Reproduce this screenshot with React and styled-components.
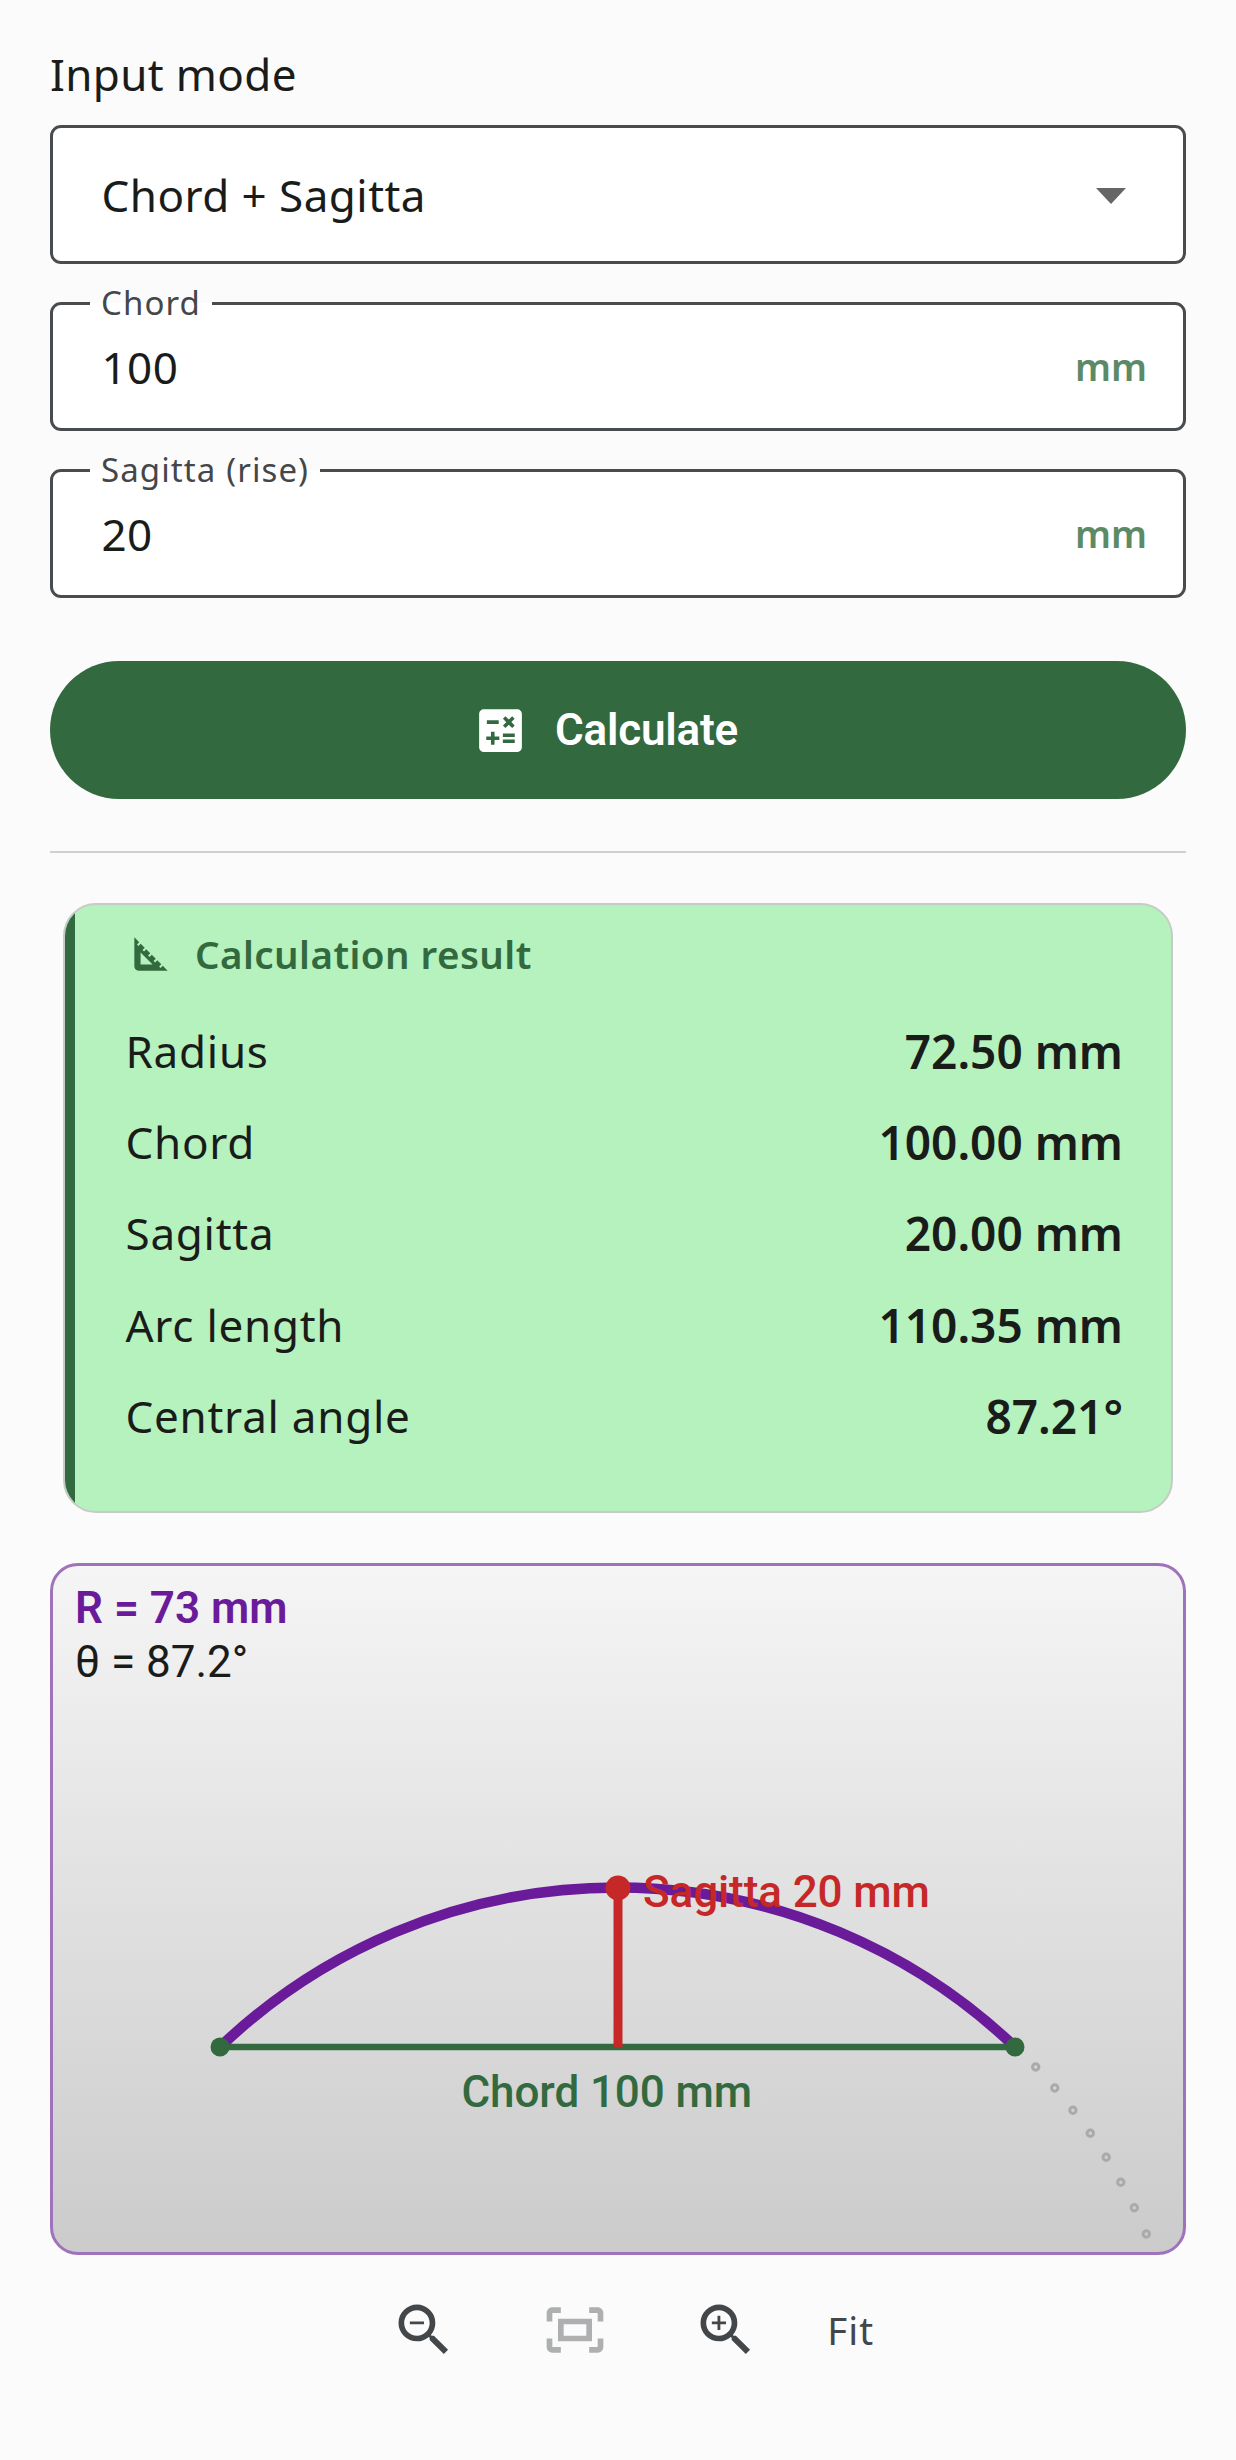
import React from "react";
import styled, { createGlobalStyle } from "styled-components";
import {
  MdCalculate,
  MdOutlineFitScreen,
  MdSquareFoot,
  MdZoomIn,
  MdZoomOut,
} from "react-icons/md";

const GlobalStyle = createGlobalStyle`
  body {
    margin: 0;
    background: #fbfbfb;
    font-family: "Noto Sans", sans-serif;
    color: #1a1c1a;
  }
`;

const Page = styled.div`
  width: 1236px;
  height: 2460px;
  box-sizing: border-box;
  padding: 44px 50px 0;
  display: flex;
  flex-direction: column;
`;

const ModeLabel = styled.div`
  height: 60px;
  line-height: 60px;
  font-size: 44px;
  letter-spacing: 0.35px;
  margin-bottom: 21px;
`;

const Select = styled.div`
  height: 139px;
  box-sizing: border-box;
  border: 3px solid #494c4f;
  border-radius: 11px;
  background: #fff;
  padding: 0 50px 0 48.5px;
  display: flex;
  align-items: center;
  justify-content: space-between;
  font-size: 44px;
  letter-spacing: 0.45px;
  margin-bottom: 38px;
`;

const Arrow = styled.div`
  width: 0;
  height: 0;
  margin: 3px 7px 0 0;
  border-left: 15px solid transparent;
  border-right: 15px solid transparent;
  border-top: 16px solid #666;
`;

const Field = styled.div`
  position: relative;
  height: 129px;
  box-sizing: border-box;
  border: 3px solid #494c4f;
  border-radius: 11px;
  background: #fff;
  padding: 0 36px 0 48.5px;
  display: flex;
  align-items: center;
  justify-content: space-between;
  font-size: 44px;
  letter-spacing: 0.45px;
  margin-bottom: 38px;
`;

const FieldLabel = styled.span`
  position: absolute;
  left: 37px;
  top: -22px;
  padding: 0 11px;
  background: linear-gradient(#fbfbfb 50%, #fff 50%);
  font-size: 33px;
  letter-spacing: 1.1px;
  line-height: 40px;
  color: #44474a;
`;

const Unit = styled.span`
  font-size: 37.5px;
  font-weight: 600;
  letter-spacing: 0;
  color: #5c8a66;
`;

const CalcButton = styled.button`
  height: 138px;
  margin-top: 25px;
  padding: 0 26px 0 0;
  border: 0;
  border-radius: 69px;
  background: #33693f;
  color: #fff;
  display: flex;
  align-items: center;
  justify-content: center;
  gap: 26px;
  font-family: "Roboto", sans-serif;
  font-size: 44px;
  font-weight: 600;
  letter-spacing: -0.2px;
`;

const Divider = styled.div`
  height: 2px;
  margin: 52px 0 50px;
  background: #cfcfcf;
`;

const ResultCard = styled.section`
  margin: 0 13px;
  height: 610px;
  box-sizing: border-box;
  border: 2px solid #c6cbc6;
  border-radius: 33px;
  overflow: hidden;
  display: flex;
  background: #b5f2bd;
`;

const Band = styled.div`
  width: 10px;
  background: #33693f;
`;

const ResultBody = styled.div`
  flex: 1;
  padding: 15.5px 48px 0 50.5px;
`;

const ResultTitle = styled.h2`
  margin: 0 0 18.5px;
  height: 66px;
  display: flex;
  align-items: center;
  gap: 19.5px;
  font-size: 38.5px;
  font-weight: 600;
  letter-spacing: 0.45px;
  color: #33693f;
`;

const Row = styled.div`
  height: 91.3px;
  display: flex;
  align-items: center;
  justify-content: space-between;
  font-size: 44px;
  letter-spacing: 0.73px;
`;

const Value = styled.span`
  font-size: 46px;
  font-weight: 600;
  letter-spacing: 0;
`;

const Canvas = styled.section`
  position: relative;
  margin-top: 50px;
  height: 692px;
  box-sizing: border-box;
  border: 3px solid #9f72bb;
  border-radius: 28px;
  overflow: hidden;
  background: linear-gradient(#f5f5f5, #cbcbcb);
  padding: 16px 22px;
  font-family: "Roboto", sans-serif;
  font-size: 44px;
  line-height: 53.5px;
`;

const Drawing = styled.svg`
  position: absolute;
  left: 0;
  top: 0;
`;

const RadiusText = styled.div`
  font-weight: 600;
  color: #6a1b9a;
`;

const DiagramLabel = styled.text`
  font-family: "Roboto", sans-serif;
  font-size: 44px;
  font-weight: 500;
  letter-spacing: -0.1px;
  fill: ${(p) => p.$color};
`;

const ZoomBar = styled.div`
  margin-top: 41px;
  padding-left: 28px;
  display: flex;
  align-items: center;
  justify-content: center;
  gap: 83px;
  color: #44474a;
`;

const ZoomIcon = styled.span`
  display: flex;
  font-size: 68px;
  opacity: ${(p) => (p.$dim ? 0.42 : 1)};
`;

const FitText = styled.span`
  margin-left: -15.5px;
  font-size: 38.5px;
  letter-spacing: 1.1px;
`;

const rows = [
  ["Radius", "72.50 mm"],
  ["Chord", "100.00 mm"],
  ["Sagitta", "20.00 mm"],
  ["Arc length", "110.35 mm"],
  ["Central angle", "87.21°"],
];

const dots = [
  [982.7, 501],
  [1001.8, 522],
  [1019.9, 544.3],
  [1037.3, 567.3],
  [1053.2, 591.3],
  [1067.8, 616.3],
  [1081.3, 641.7],
  [1093.3, 668],
];

const App = () => {
  return (
    <Page>
      <GlobalStyle />
      <ModeLabel>Input mode</ModeLabel>
      <Select>
        Chord + Sagitta
        <Arrow />
      </Select>
      <Field>
        <FieldLabel>Chord</FieldLabel>
        100
        <Unit>mm</Unit>
      </Field>
      <Field>
        <FieldLabel>Sagitta (rise)</FieldLabel>
        20
        <Unit>mm</Unit>
      </Field>
      <CalcButton>
        <MdCalculate size={57} />
        Calculate
      </CalcButton>
      <Divider />
      <ResultCard>
        <Band />
        <ResultBody>
          <ResultTitle>
            <MdSquareFoot size={50} />
            Calculation result
          </ResultTitle>
          {rows.map(([label, value]) => (
            <Row key={label}>
              <span>{label}</span>
              <Value>{value}</Value>
            </Row>
          ))}
        </ResultBody>
      </ResultCard>
      <Canvas>
        <Drawing width="1130" height="686" viewBox="0 0 1130 686">
          <path
            d="M167 481 A575 575 0 0 1 962 481"
            fill="none"
            stroke="#6a1b9a"
            strokeWidth="10.5"
          />
          <line x1="167" y1="481" x2="962" y2="481" stroke="#33693f" strokeWidth="6.5" />
          <line x1="565" y1="322" x2="565" y2="481" stroke="#c62828" strokeWidth="9" />
          {dots.map(([x, y]) => (
            <circle key={x} cx={x} cy={y} r="3.2" fill="none" stroke="#aaa" strokeWidth="3" />
          ))}
          <circle cx="167" cy="481" r="9.5" fill="#33693f" />
          <circle cx="962" cy="481" r="9.5" fill="#33693f" />
          <circle cx="565" cy="322" r="12.5" fill="#c62828" />
          <DiagramLabel x="590" y="341" $color="#c62828">
            Sagitta 20 mm
          </DiagramLabel>
          <DiagramLabel x="408.5" y="541" $color="#33693f">
            Chord 100 mm
          </DiagramLabel>
        </Drawing>
        <RadiusText>R = 73 mm</RadiusText>
        <div>θ = 87.2°</div>
      </Canvas>
      <ZoomBar>
        <ZoomIcon>
          <MdZoomOut />
        </ZoomIcon>
        <ZoomIcon $dim>
          <MdOutlineFitScreen />
        </ZoomIcon>
        <ZoomIcon>
          <MdZoomIn />
        </ZoomIcon>
        <FitText>Fit</FitText>
      </ZoomBar>
    </Page>
  );
};

export default App;
